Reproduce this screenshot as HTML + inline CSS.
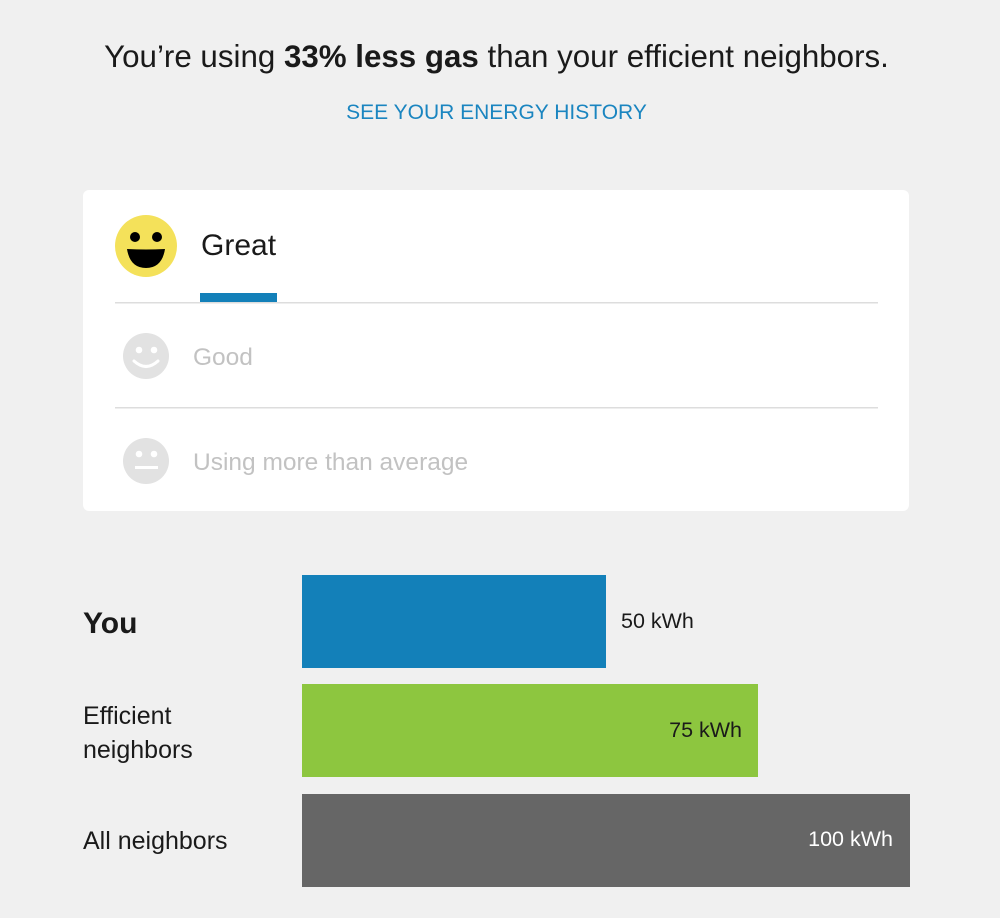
<!DOCTYPE html>
<html><head><style>
body{margin:0;width:1000px;height:918px;background:#f0f0f0;font-family:"Liberation Sans",sans-serif;position:relative;overflow:hidden;color:#1a1a1a}
.a{position:absolute;white-space:nowrap}
</style></head><body>
<div class="a" style="left:0;width:993px;text-align:center;top:39px;font-size:31.3px;">You’re using <b>33% less gas</b> than your efficient neighbors.</div>
<div class="a" style="left:0;width:993px;text-align:center;top:101px;font-size:21px;color:#1a85c0;">SEE YOUR ENERGY HISTORY</div>
<div class="a" style="left:83px;top:190px;width:826px;height:321px;background:#fff;border-radius:6px"></div>
<svg class="a" style="left:0;top:0" width="1000" height="520">
<circle cx="146" cy="246" r="31" fill="#f4e15a"/>
<circle cx="135" cy="237" r="5" fill="#000"/><circle cx="157" cy="237" r="5" fill="#000"/>
<path d="M127 249 Q146 250 165 249 Q162 268 146 268 Q130 268 127 249Z" fill="#000"/>
<rect x="200" y="293" width="77" height="9" fill="#1380b9"/>
<rect x="115" y="302" width="763" height="1.5" fill="#ddd"/>
<circle cx="146" cy="356" r="23" fill="#e2e2e2"/>
<circle cx="139" cy="350" r="3.3" fill="#fff"/><circle cx="154" cy="350" r="3.3" fill="#fff"/>
<path d="M134 361 Q146 372 158 361" stroke="#fff" stroke-width="3" fill="none" stroke-linecap="round"/>
<rect x="115" y="407" width="763" height="1.5" fill="#ddd"/>
<circle cx="146" cy="461" r="23" fill="#e2e2e2"/>
<circle cx="139" cy="454" r="3.3" fill="#fff"/><circle cx="154" cy="454" r="3.3" fill="#fff"/>
<rect x="135" y="466" width="23" height="3" fill="#fff"/>
</svg>
<div class="a" style="left:201px;top:229px;font-size:30px;">Great</div>
<div class="a" style="left:193px;top:344px;font-size:24.5px;color:#c2c2c2">Good</div>
<div class="a" style="left:193px;top:449px;font-size:24.5px;color:#c2c2c2">Using more than average</div>
<div class="a" style="left:302px;top:575px;width:304px;height:93px;background:#1380b9"></div>
<div class="a" style="left:302px;top:684px;width:456px;height:93px;background:#8dc63f"></div>
<div class="a" style="left:302px;top:794px;width:608px;height:93px;background:#666"></div>
<div class="a" style="left:83px;top:607px;font-size:30px;font-weight:bold">You</div>
<div class="a" style="left:83px;top:699px;font-size:25px;line-height:34px">Efficient<br>neighbors</div>
<div class="a" style="left:83px;top:827px;font-size:25px">All neighbors</div>
<div class="a" style="left:621px;top:609px;font-size:21.5px">50 kWh</div>
<div class="a" style="left:600px;width:142px;text-align:right;top:718px;font-size:21.5px">75 kWh</div>
<div class="a" style="left:700px;width:193px;text-align:right;top:827px;font-size:21.5px;color:#fff">100 kWh</div>
</body></html>
